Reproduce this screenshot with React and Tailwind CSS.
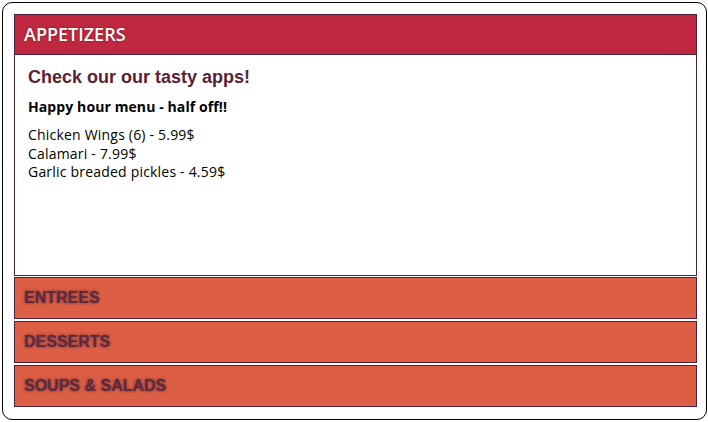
import { useState } from "react";

const sections = [
  {
    title: "APPETIZERS",
    heading: "Check our our tasty apps!",
    sub: "Happy hour menu - half off!!",
    items: ["Chicken Wings (6) - 5.99$", "Calamari - 7.99$", "Garlic breaded pickles - 4.59$"],
  },
  { title: "ENTREES", heading: "", sub: "", items: [] },
  { title: "DESSERTS", heading: "", sub: "", items: [] },
  { title: "SOUPS & SALADS", heading: "", sub: "", items: [] },
];

export default function App() {
  const [open, setOpen] = useState(0);

  return (
    <div className="w-[708px] h-[422px] bg-white pt-[2px] pl-[2px] pr-[1px] pb-[2px] font-['Liberation_Sans',sans-serif]">
      <div className="h-[418px] border border-black rounded-[10px] pt-[11px] pl-[11px] pr-[9px] flex flex-col gap-[2px]">
        {sections.map((s, i) =>
          open === i ? (
            <div key={s.title} className="-mb-[1px]">
              <button
                onClick={() => setOpen(i)}
                className="w-full h-[41px] flex items-center px-[9px] bg-[#c0283f] border border-[#4b2040] text-white text-[18px] font-semibold font-['Open_Sans',sans-serif] [text-shadow:0_0_2px_rgba(60,10,20,0.6)]"
              >
                {s.title}
              </button>
              <div className="h-[221px] bg-white border border-t-0 border-[#4b2040] px-[13px] pt-[11px]">
                <h2 className="text-[18px] font-bold text-[#5a2236] leading-[22px]">{s.heading}</h2>
                <p className="mt-[10px] text-[14px] font-bold text-black leading-[18px] font-['Open_Sans',sans-serif] tracking-[0.1px]">
                  {s.sub}
                </p>
                <ul className="mt-[10px] text-[14px] text-black leading-[18.5px] font-['Open_Sans',sans-serif] tracking-[0.2px]">
                  {s.items.map((it) => (
                    <li key={it}>{it}</li>
                  ))}
                </ul>
              </div>
            </div>
          ) : (
            <button
              key={s.title}
              onClick={() => setOpen(i)}
              className="w-full h-[42px] shrink-0 flex items-center px-[9px] bg-[#db5e45] border border-[#4b2040] text-[#5a2a40] font-bold text-[16px] [text-shadow:0_0_3px_rgba(60,20,40,0.7)]"
            >
              {s.title}
            </button>
          )
        )}
      </div>
    </div>
  );
}
